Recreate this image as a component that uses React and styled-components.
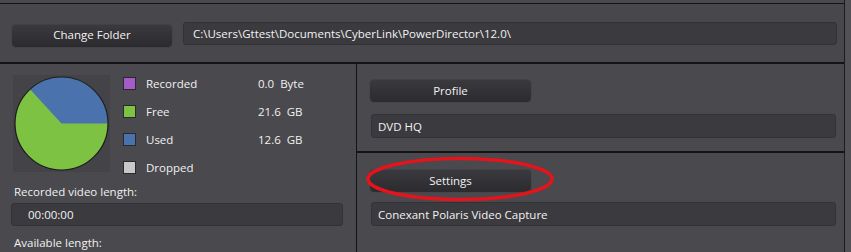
import React from "react";
import styled, { createGlobalStyle } from "styled-components";

const Global = createGlobalStyle`
  html, body { margin: 0; padding: 0; background: #4a494e; }
  body { font-family: "Open Sans", "Noto Sans", sans-serif; }
`;

const Page = styled.div`
  width: 851px;
  height: 252px;
  overflow: hidden;
  background: #525156;
  color: #f1f1f1;
  font-size: 11.5px;
`;

const Frame = styled.div`
  width: 845px;
  height: 252px;
  padding-top: 3px;
  box-sizing: border-box;
  background: #4a494e;
  border-right: 1px solid #1c1c1e;
  display: flex;
  flex-direction: column;
`;

const TopBar = styled.div`
  flex: none;
  height: 58px;
  border-top: 1px solid #141416;
  border-bottom: 2px solid #141416;
  display: flex;
  align-items: center;
  padding: 0 7px 0 12px;
  gap: 11px;
  background: #48474c;
`;

const Button = styled.div`
  width: ${(p) => p.$w || 160}px;
  height: 22px;
  flex: none;
  border-radius: 4px;
  background: linear-gradient(#3b3a3e, #2c2b2f);
  box-shadow: 0 1px 1px rgba(0, 0, 0, 0.45), inset 0 1px 0 rgba(255, 255, 255, 0.04);
  display: flex;
  align-items: center;
  justify-content: center;
  color: #f2f2f2;
  margin-top: ${(p) => p.$mt || 0}px;
`;

const Field = styled.div`
  flex: 1;
  height: ${(p) => p.$h || 23}px;
  box-sizing: border-box;
  background: #3b3a3e;
  border: 1px solid #323135;
  border-radius: 3px;
  display: flex;
  align-items: center;
  padding-left: ${(p) => p.$pl || 9}px;
  color: #f2f2f2;
  white-space: nowrap;
`;

const Body = styled.div`
  flex: 1;
  min-height: 0;
  overflow: hidden;
  display: flex;
`;

const LeftPanel = styled.div`
  width: 357px;
  flex: none;
  border-right: 1px solid #141416;
  box-sizing: border-box;
  padding: 0 13px 0 11px;
  display: flex;
  flex-direction: column;
`;

const StatsRow = styled.div`
  display: flex;
  align-items: flex-start;
  margin-left: 2px;
`;

const PieBox = styled.div`
  width: 97px;
  height: 97px;
  margin-top: 11px;
  background: #444348;
  display: flex;
  align-items: center;
  justify-content: center;
  flex: none;
`;

const Legend = styled.div`
  margin-left: 13px;
  margin-top: 5px;
  display: flex;
  flex-direction: column;
`;

const LegendRow = styled.div`
  height: 28px;
  display: flex;
  align-items: center;
  white-space: nowrap;
`;

const Swatch = styled.span`
  width: 13px;
  height: 13px;
  box-sizing: border-box;
  background: ${(p) => p.$c};
  border: 1px solid #2a2a2c;
  flex: none;
`;

const LegendLabel = styled.span`
  margin-left: 10px;
  width: 112px;
  flex: none;
`;

const Num = styled.span`
  margin-right: 6px;
  flex: none;
`;

const Unit = styled.span`
  flex: none;
`;

const Label = styled.div`
  margin-left: 3px;
  margin-top: ${(p) => p.$mt || 0}px;
  height: 16px;
  line-height: 16px;
  flex: none;
`;

const TimeField = styled(Field)`
  flex: none;
  margin-top: 3px;
  padding-left: 16px;
`;

const RightPanel = styled.div`
  flex: 1;
  display: flex;
  flex-direction: column;
`;

const Section = styled.div`
  height: ${(p) => p.$h}px;
  flex: none;
  box-sizing: border-box;
  padding: 0 8px 0 13px;
  display: flex;
  flex-direction: column;
  border-bottom: ${(p) => (p.$divider ? "2px solid #141416" : "none")};
`;

const FieldRow = styled.div`
  display: flex;
  margin-top: ${(p) => p.$mt}px;
  margin-left: 1px;
`;

const Highlight = styled.div`
  position: relative;
  width: 161px;
  margin-top: 16px;
`;

const Ellipse = styled.svg`
  position: absolute;
  left: -5px;
  top: -13px;
  pointer-events: none;
`;

function Pie() {
  const cx = 48.5;
  const cy = 48.5;
  const r = 46.5;
  const blue = 12.6 / (12.6 + 21.6);
  const a = blue * 2 * Math.PI;
  const x = cx + r * Math.cos(a);
  const y = cy - r * Math.sin(a);
  return (
    <svg width="97" height="97" viewBox="0 0 97 97">
      <circle cx={cx} cy={cy} r={r} fill="#7dc242" />
      <path d={`M${cx} ${cy} L${cx + r} ${cy} A${r} ${r} 0 0 0 ${x} ${y} Z`} fill="#4a72ad" />
      <circle cx={cx} cy={cy} r={r} fill="none" stroke="#1d1d1d" strokeWidth="1.2" />
    </svg>
  );
}

const legend = [
  { c: "#a35cc8", label: "Recorded", num: "0.0", unit: "Byte" },
  { c: "#7dc242", label: "Free", num: "21.6", unit: "GB" },
  { c: "#4a72ad", label: "Used", num: "12.6", unit: "GB" },
  { c: "#c8c8c8", label: "Dropped" },
];

export default function App() {
  return (
    <Page>
      <Global />
      <Frame>
        <TopBar>
          <Button $w={160} $mt={3}>Change Folder</Button>
          <Field>C:\Users\Gttest\Documents\CyberLink\PowerDirector\12.0\</Field>
        </TopBar>
        <Body>
          <LeftPanel>
            <StatsRow>
              <PieBox>
                <Pie />
              </PieBox>
              <Legend>
                {legend.map((l) => (
                  <LegendRow key={l.label}>
                    <Swatch $c={l.c} />
                    <LegendLabel>{l.label}</LegendLabel>
                    {l.num && (
                      <>
                        <Num>{l.num}</Num>
                        <Unit>{l.unit}</Unit>
                      </>
                    )}
                  </LegendRow>
                ))}
              </Legend>
            </StatsRow>
            <Label $mt={3}>Recorded video length:</Label>
            <TimeField>00:00:00</TimeField>
            <Label $mt={9}>Available length:</Label>
          </LeftPanel>
          <RightPanel>
            <Section $h={89} $divider>
              <Button $w={161} $mt={15}>Profile</Button>
              <FieldRow $mt={13}>
                <Field $h={24} $pl={6}>DVD HQ</Field>
              </FieldRow>
            </Section>
            <Section $h={100}>
              <Highlight>
                <Button $w={161}>Settings</Button>
                <Ellipse width="190" height="48" viewBox="0 0 190 48">
                  <ellipse cx="95" cy="23" rx="92" ry="20.5" fill="none" stroke="#e3141c" strokeWidth="3.5" />
                </Ellipse>
              </Highlight>
              <FieldRow $mt={11}>
                <Field $h={24} $pl={6}>Conexant Polaris Video Capture</Field>
              </FieldRow>
            </Section>
          </RightPanel>
        </Body>
      </Frame>
    </Page>
  );
}
